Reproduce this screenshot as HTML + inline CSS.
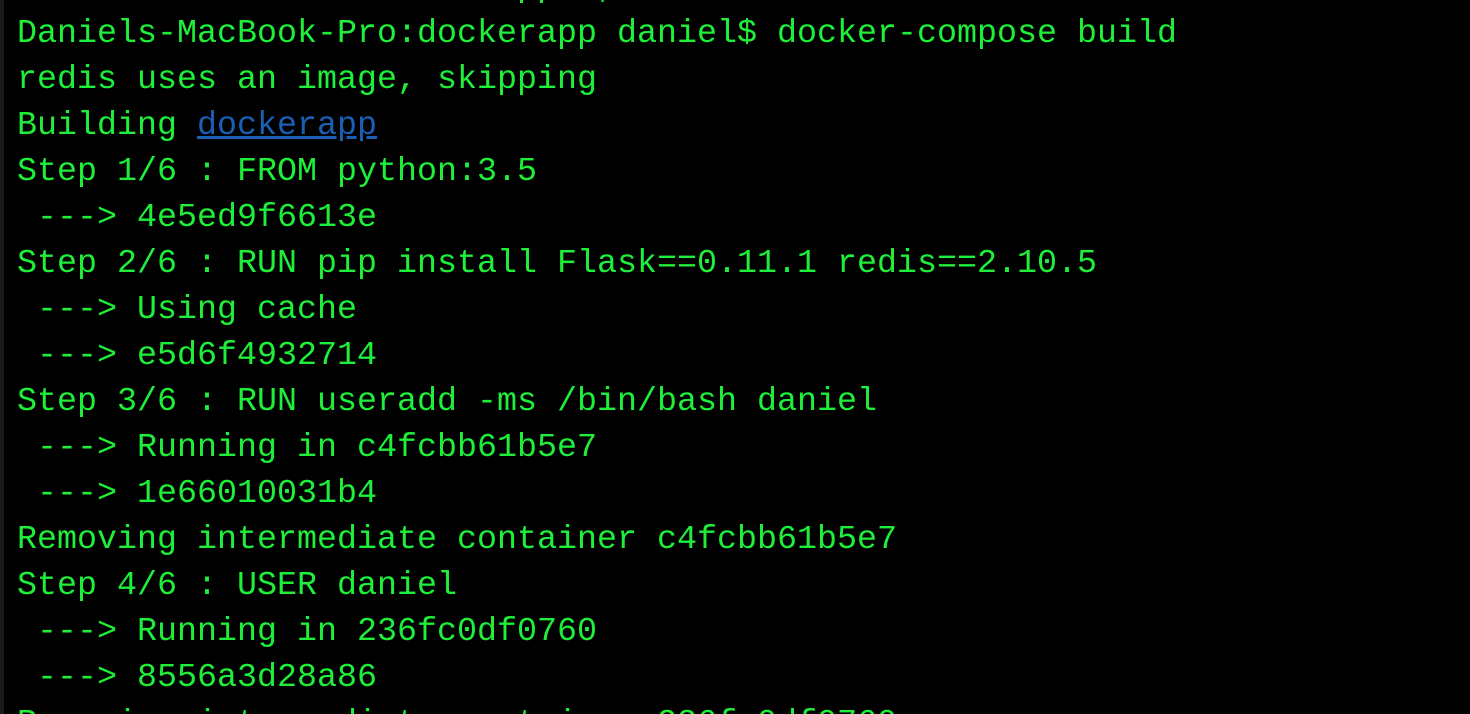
<!DOCTYPE html>
<html><head><style>
html,body{margin:0;padding:0;background:#000;width:1470px;height:714px;overflow:hidden}
body{position:relative}
.bar{position:absolute;left:0;top:0;width:4px;height:714px;background:#1a1a1a}
pre{position:absolute;left:17px;top:-35px;margin:0;font-family:"Liberation Mono",monospace;font-size:33.33px;line-height:46px;color:#1ef03a;white-space:pre}
a{color:#1a5fb4;text-decoration:underline}
</style></head><body><div class="bar"></div><pre>                         pp  ,
Daniels-MacBook-Pro:dockerapp daniel$ docker-compose build
redis uses an image, skipping
Building <a>dockerapp</a>
Step 1/6 : FROM python:3.5
 ---> 4e5ed9f6613e
Step 2/6 : RUN pip install Flask==0.11.1 redis==2.10.5
 ---> Using cache
 ---> e5d6f4932714
Step 3/6 : RUN useradd -ms /bin/bash daniel
 ---> Running in c4fcbb61b5e7
 ---> 1e66010031b4
Removing intermediate container c4fcbb61b5e7
Step 4/6 : USER daniel
 ---> Running in 236fc0df0760
 ---> 8556a3d28a86
Removing intermediate container 236fc0df0760</pre></body></html>
